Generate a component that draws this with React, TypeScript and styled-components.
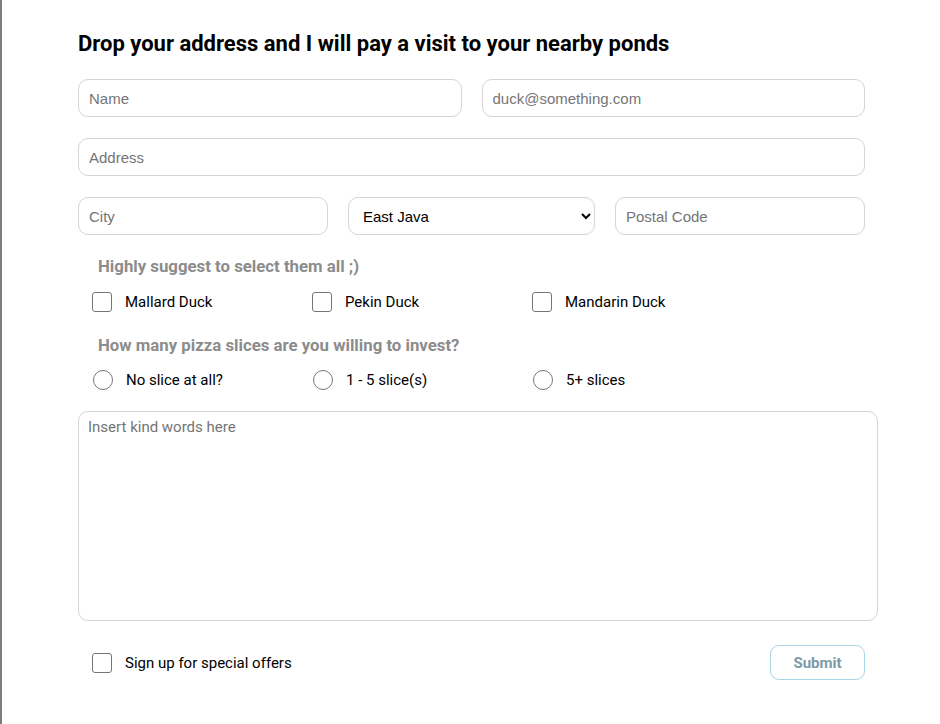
import React from "react";
import styled, { createGlobalStyle } from "styled-components";

const GlobalStyle = createGlobalStyle`
  html, body { margin: 0; padding: 0; background: #ffffff; }
  body { font-family: Roboto, "Liberation Sans", sans-serif; color: #000; }
  * { box-sizing: border-box; }
`;

const Page = styled.div`
  min-height: 724px;
  border-left: 2px solid #7d7d7d;
  padding: 31px 0 40px 76px;
`;

const Form = styled.form`
  width: 800px;
  display: flex;
  flex-direction: column;
`;

const Title = styled.h2`
  margin: 0 0 22px;
  font-family: Roboto, sans-serif;
  font-size: 22px;
  font-weight: 700;
  line-height: 26px;
  color: #000;
`;

const FieldGrid = styled.div<{ $template: string }>`
  width: 787px;
  display: grid;
  grid-template-columns: ${(p) => p.$template};
  column-gap: 20px;
  margin-bottom: 21px;
`;

const fieldStyles = `
  height: 38px;
  width: 100%;
  border: 1px solid #d4d4d4;
  border-radius: 10px;
  background: #fff;
  font-family: "Liberation Sans", Arial, sans-serif;
  font-size: 15px;
  color: #000;
  outline: none;
`;

const TextInput = styled.input`
  ${fieldStyles}
  padding: 0 10px;
  &::placeholder { color: #757575; }
`;

const Select = styled.select`
  ${fieldStyles}
  padding: 0 6px 0 10px;
`;

const GroupHeading = styled.div<{ $after: number }>`
  padding-left: 20px;
  margin-bottom: ${(p) => p.$after}px;
  font-family: Roboto, sans-serif;
  font-size: 16.8px;
  font-weight: 700;
  line-height: 21px;
  color: #8c8c8c;
`;

const OptionRow = styled.div<{ $mb: number }>`
  display: grid;
  grid-template-columns: 220px 220px 220px;
  padding-left: 14px;
  margin-bottom: ${(p) => p.$mb}px;
`;

const OptionLabel = styled.label`
  display: flex;
  align-items: center;
  gap: 13px;
  height: 20px;
  font-family: Roboto, sans-serif;
  font-size: 15px;
  color: #000;
`;

const Check = styled.input.attrs({ type: "checkbox" })`
  width: 20px;
  height: 20px;
  margin: 0;
  appearance: none;
  border: 1px solid #767676;
  border-radius: 3px;
  background: #fff;
  flex: none;
`;

const Radio = styled.input.attrs({ type: "radio" })`
  width: 20px;
  height: 20px;
  margin: 0 0 0 1px;
  appearance: none;
  border: 1px solid #767676;
  border-radius: 50%;
  background: #fff;
  flex: none;
`;

const TextArea = styled.textarea`
  width: 800px;
  height: 210px;
  margin: 0 0 24px;
  padding: 6px 9px;
  border: 1px solid #d4d4d4;
  border-radius: 10px;
  resize: none;
  font-family: Roboto, sans-serif;
  font-size: 15px;
  line-height: 18px;
  outline: none;
  &::placeholder { color: #757575; }
`;

const Footer = styled.div`
  width: 787px;
  display: flex;
  align-items: center;
  justify-content: space-between;
  padding-left: 14px;
`;

const SubmitButton = styled.button`
  width: 95px;
  height: 35px;
  border: 1px solid #a9d6e5;
  border-radius: 9px;
  background: #fff;
  font-family: Roboto, sans-serif;
  font-size: 15px;
  font-weight: 700;
  color: #7e9aa6;
  cursor: pointer;
`;

export default function App() {
  return (
    <>
      <GlobalStyle />
      <Page>
        <Form onSubmit={(e) => e.preventDefault()}>
          <Title>Drop your address and I will pay a visit to your nearby ponds</Title>
          <FieldGrid $template="1fr 1fr">
            <TextInput placeholder="Name" />
            <TextInput placeholder="duck@something.com" />
          </FieldGrid>
          <FieldGrid $template="1fr">
            <TextInput placeholder="Address" />
          </FieldGrid>
          <FieldGrid $template="1fr 247px 1fr">
            <TextInput placeholder="City" />
            <Select defaultValue="East Java">
              <option>East Java</option>
              <option>West Java</option>
              <option>Central Java</option>
            </Select>
            <TextInput placeholder="Postal Code" />
          </FieldGrid>
          <GroupHeading $after={15}>Highly suggest to select them all ;)</GroupHeading>
          <OptionRow $mb={23}>
            <OptionLabel><Check />Mallard Duck</OptionLabel>
            <OptionLabel><Check />Pekin Duck</OptionLabel>
            <OptionLabel><Check />Mandarin Duck</OptionLabel>
          </OptionRow>
          <GroupHeading $after={14}>How many pizza slices are you willing to invest?</GroupHeading>
          <OptionRow $mb={21}>
            <OptionLabel><Radio name="pizza" />No slice at all?</OptionLabel>
            <OptionLabel><Radio name="pizza" />1 - 5 slice(s)</OptionLabel>
            <OptionLabel><Radio name="pizza" />5+ slices</OptionLabel>
          </OptionRow>
          <TextArea placeholder="Insert kind words here" />
          <Footer>
            <OptionLabel><Check />Sign up for special offers</OptionLabel>
            <SubmitButton type="submit">Submit</SubmitButton>
          </Footer>
        </Form>
      </Page>
    </>
  );
}
